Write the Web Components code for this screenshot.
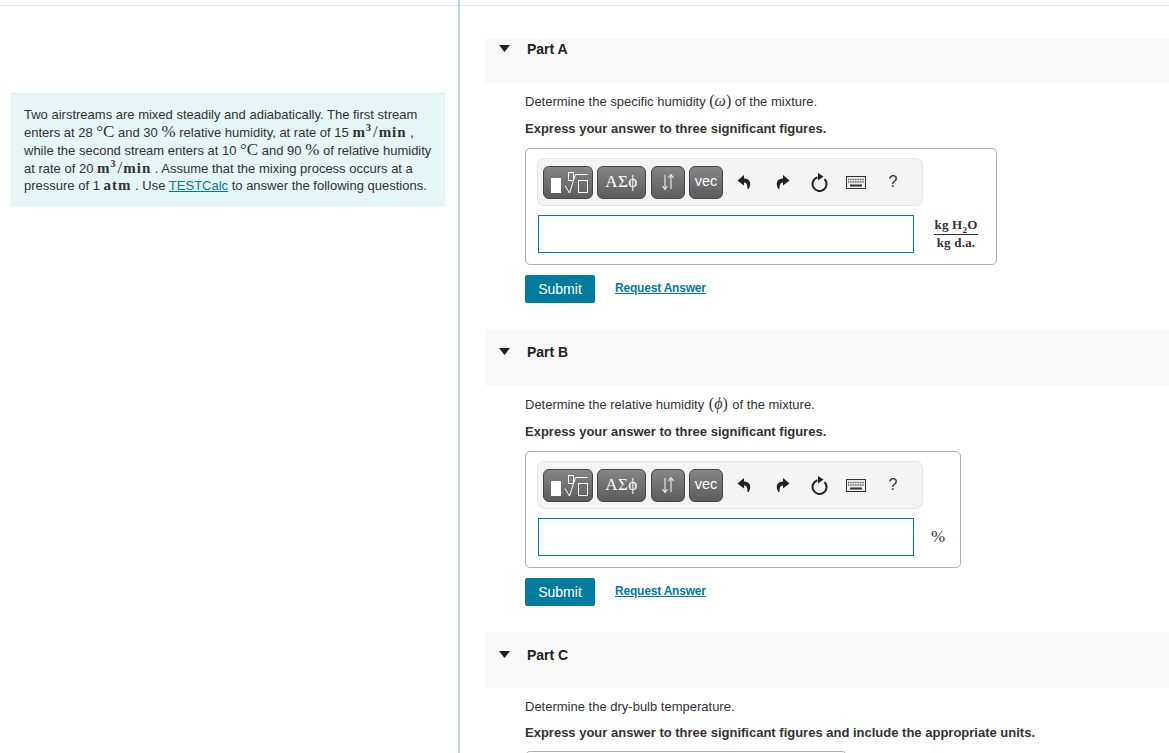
<!DOCTYPE html>
<html lang="en">
<head>
<meta charset="utf-8">
<title>Part A</title>
<style>
  html, body { margin: 0; height: 100%; overflow: hidden; background: #fff; }
  body { font-family: "Liberation Sans", Arial, sans-serif; color: #333; }
  .m { font-family: "Liberation Serif", serif; font-size: 16px; line-height: 0; }
  .mb { font-family: "Liberation Serif", serif; font-size: 15px; font-weight: 700; line-height: 0; letter-spacing: 1px; }
  .mb sup { font-size: 10px; line-height: 0; }
  .bigc { font-family: "Liberation Serif", serif; font-size: 17px; line-height: 0; }
  .slash { margin: 0 1px; }
</style>
</head>
<body>
<template id="split-page-template">
  <style>
    :host { display: grid; grid-template-columns: 460px 1fr; height: 100vh; overflow: hidden; }
    .col { padding-top: 5px; min-width: 0; }
    .col.left { border-right: 2px solid #c3d5e4; box-sizing: border-box; }
    .rule { border-top: 1px solid #e2e2e2; }
  </style>
  <div class="col left"><div class="rule"><slot name="left"></slot></div></div>
  <div class="col"><div class="rule"><slot></slot></div></div>
</template>

<template id="intro-panel-template">
  <style>
    :host { display: block; margin: 87px 13px 0 11px; padding: 12px 13px 0; height: 114px; box-sizing: border-box;
      background: #e6f5f6; border-top: 1px solid #dde9ea; font-size: 13px; line-height: 17.85px; color: #333; }
  </style>
  <slot></slot>
</template>

<template id="question-part-template">
  <style>
    :host { display: block; margin-left: 25px; }
    header { display: flex; align-items: flex-start; background: #f9f9f9; box-sizing: border-box; padding-top: var(--head-pad, 16px); height: var(--head-h, 57px); font-size: 14px; font-weight: 700; line-height: 15px; color: #222; }
    svg { margin: 3px 0 0 14px; width: 11px; height: 7px; flex: none; }
    .title { margin-left: 17px; }
    .body { padding: 10px 0 0 40px; font-size: 13px; line-height: 18px; color: #333; }
    .note { font-weight: 700; margin-top: var(--note-gap, 9px); }
    ::slotted([slot="desc"]) { display: block; }
  </style>
  <header>
    <svg viewBox="0 0 11 7" aria-hidden="true"><path d="M0 0h11L5.500 7z" fill="#222"/></svg>
    <span class="title"><slot name="title"></slot></span>
  </header>
  <div class="body">
    <slot name="desc"></slot>
    <div class="note"><slot name="note"></slot></div>
    <slot></slot>
  </div>
</template>

<template id="answer-box-template">
  <style>
    :host { display: block; box-sizing: border-box; margin-top: var(--box-gap, 10px); padding: 9px 12px 11px 12px; border: 1px solid #b0b0b0; border-radius: 5px; background: #fff; }
    .row { display: flex; align-items: center; margin-top: 9px; }
    .field { flex: none; width: 376px; height: 38px; box-sizing: border-box; border: 1px solid #007c9e; background: #fff; }
    .unit { flex: 1; display: flex; justify-content: center; align-items: center; padding-left: 14px; font-family: "Liberation Serif", serif; color: #333; min-width: 0; }
  </style>
  <slot name="toolbar"></slot>
  <div class="row">
    <div class="field"></div>
    <div class="unit"><slot></slot></div>
  </div>
</template>

<template id="math-toolbar-template">
  <style>
    :host { display: flex; align-items: center; width: 386px; height: 48px; margin-left: -1px; box-sizing: border-box; padding: 0 5px; gap: 4px;
      background: #f4f4f4; border: 1px solid #e4e4e4; border-radius: 7px; }
    .tool { flex: none; display: flex; align-items: center; justify-content: center; height: 33px; box-sizing: border-box; border: 1px solid #444; border-radius: 6px;
      background: linear-gradient(#858585, #5c5c5c); color: #fff; }
    .t1 { width: 50px; } .t2 { width: 49px; font: 17px "Liberation Serif", serif; letter-spacing: .5px; }
    .t3 { width: 34px; margin-left: 1px; } .t4 { width: 34px; font-size: 14.500px; padding-bottom: 3px; }
    .act { flex: none; display: flex; align-items: center; justify-content: center; color: #222; }
    .undo { width: 20px; margin-left: 7px; }
    .redo { width: 20px; margin-left: 15px; }
    .reset { width: 20px; margin-left: 12px; }
    .kbd { width: 22px; margin-left: 12px; }
    .help { width: 12px; margin-left: 16px; font-size: 16px; color: #333; padding-bottom: 1px; }
  </style>
  <div class="tool t1">
    <svg width="40" height="25" viewBox="0 0 40 25" aria-hidden="true">
      <rect x="3" y="8" width="10" height="15" fill="#fff"/>
      <rect x="20.500" y="2.500" width="5" height="8" fill="none" stroke="#fff"/>
      <path d="M17 15.500l4.500 7.500L27.500 4.500h12" fill="none" stroke="#fff"/>
      <rect x="30.500" y="10.500" width="9" height="12" fill="none" stroke="#fff"/>
    </svg>
  </div>
  <div class="tool t2">&Alpha;&Sigma;&#981;</div>
  <div class="tool t3">
    <svg width="16" height="18" viewBox="0 0 16 18" aria-hidden="true"><path d="M5 2v14M2.500 13 5 16.500 7.500 13M11 16V2M8.500 5 11 1.500 13.500 5" fill="none" stroke="#e4e4e4" stroke-width="1.200"/></svg>
  </div>
  <div class="tool t4">vec</div>
  <div class="act undo"><svg width="14" height="16" viewBox="0 0 14 16" aria-hidden="true"><path d="M7 1 .5 6.500 7 11.500V8.500c2.500 0 3.500 2 3.500 6.500h1c3-4.500 2.500-10-4.500-10.500z" fill="#222"/></svg></div>
  <div class="act redo"><svg width="14" height="16" viewBox="0 0 14 16" aria-hidden="true"><path d="M7 1l6.500 5.500L7 11.500V8.500c-2.500 0-3.500 2-3.500 6.500h-1C-.5 10.500 0 5 7 4.500z" fill="#222"/></svg></div>
  <div class="act reset"><svg width="17" height="19" viewBox="0 0 17 19" aria-hidden="true"><path d="M13.500 6A7 7 0 1 1 6.500 4.300" fill="none" stroke="#222" stroke-width="2"/><path d="M7 0v7.500l5.500-4z" fill="#222"/></svg></div>
  <div class="act kbd"><svg width="20" height="13" viewBox="0 0 20 13" aria-hidden="true"><rect x=".5" y=".5" width="19" height="12" fill="#eee" stroke="#333"/><path d="M2 3.500h16M2 6h16" stroke="#555" stroke-width="1.300" stroke-dasharray="1 .7"/><path d="M4 9.500h12" stroke="#333" stroke-width="2"/></svg></div>
  <div class="act help">?</div>
</template>

<template id="submit-row-template">
  <style>
    :host { display: flex; align-items: flex-start; gap: 20px; margin-top: 10px; }
    button { width: 70px; height: 28px; padding: 0; border: 0; border-radius: 2px; background: #007c9e; color: #fff; font: 14px "Liberation Sans", Arial, sans-serif; }
    a { margin-top: 5px; font-size: 12px; line-height: 16px; font-weight: 700; color: #007c9e; text-decoration: underline; letter-spacing: -.2px; }
  </style>
  <button type="button">Submit</button>
  <a href="#">Request Answer</a>
</template>

<template id="unit-fraction-template">
  <style>
    :host { display: inline-flex; flex-direction: column; align-items: center; font: 700 13px/14px "Liberation Serif", serif; letter-spacing: .2px; color: #333; }
    .top { border-bottom: 1px solid #333; padding: 0 1px 2px; }
    .bottom { padding-top: 1px; }
  </style>
  <div class="top"><slot name="top"></slot></div>
  <div class="bottom"><slot name="bottom"></slot></div>
</template>

<split-page>
  <intro-panel slot="left">Two airstreams are mixed steadily and adiabatically. The first stream<br>enters at 28 <span class="bigc">&deg;C</span> and 30 <span class="bigc">%</span> relative humidity, at rate of 15 <span class="mb">m<sup>3</sup></span><span class="bigc slash">/</span><span class="mb">min</span> ,<br>while the second stream enters at 10 <span class="bigc">&deg;C</span> and 90 <span class="bigc">%</span> of relative humidity<br>at rate of 20 <span class="mb">m<sup>3</sup></span><span class="bigc slash">/</span><span class="mb">min</span> . Assume that the mixing process occurs at a<br>pressure of 1 <span class="mb">atm</span> . Use <a href="#" style="color:#007c9e">TESTCalc</a> to answer the following questions.</intro-panel>

  <question-part style="--head-pad:3px;--head-h:44px;margin-top:33px">
    <span slot="title">Part A</span>
    <span slot="desc">Determine the specific humidity <span class="m">(<i>&omega;</i>)</span> of the mixture.</span>
    <span slot="note">Express your answer to three significant figures.</span>
    <answer-box style="width:472px">
      <math-toolbar slot="toolbar"></math-toolbar>
      <unit-fraction><span slot="top">kg H<sub style="font-size:9px;line-height:0">2</sub>O</span><span slot="bottom">kg d.a.</span></unit-fraction>
    </answer-box>
    <submit-row></submit-row>
  </question-part>

  <question-part style="margin-top:26px">
    <span slot="title">Part B</span>
    <span slot="desc">Determine the relative humidity <span class="m" style="margin:0 1px">(<i>&#981;</i>)</span> of the mixture.</span>
    <span slot="note">Express your answer to three significant figures.</span>
    <answer-box style="width:436px">
      <math-toolbar slot="toolbar"></math-toolbar>
      <span style="font-size:17px">%</span>
    </answer-box>
    <submit-row></submit-row>
  </question-part>

  <question-part style="margin-top:26px;--head-h:56px;--note-gap:8px;--box-gap:9px">
    <span slot="title">Part C</span>
    <span slot="desc">Determine the dry-bulb temperature.</span>
    <span slot="note">Express your answer to three significant figures and include the appropriate units.</span>
    <answer-box style="width:322px"></answer-box>
  </question-part>
</split-page>

<script>
  function defineFromTemplate(name, templateId) {
    customElements.define(name, class extends HTMLElement {
      constructor() {
        super();
        var shadow = this.attachShadow({ mode: 'open' });
        shadow.appendChild(document.getElementById(templateId).content.cloneNode(true));
      }
    });
  }
  defineFromTemplate('split-page', 'split-page-template');
  defineFromTemplate('intro-panel', 'intro-panel-template');
  defineFromTemplate('question-part', 'question-part-template');
  defineFromTemplate('answer-box', 'answer-box-template');
  defineFromTemplate('math-toolbar', 'math-toolbar-template');
  defineFromTemplate('submit-row', 'submit-row-template');
  defineFromTemplate('unit-fraction', 'unit-fraction-template');
</script>
</body>
</html>
